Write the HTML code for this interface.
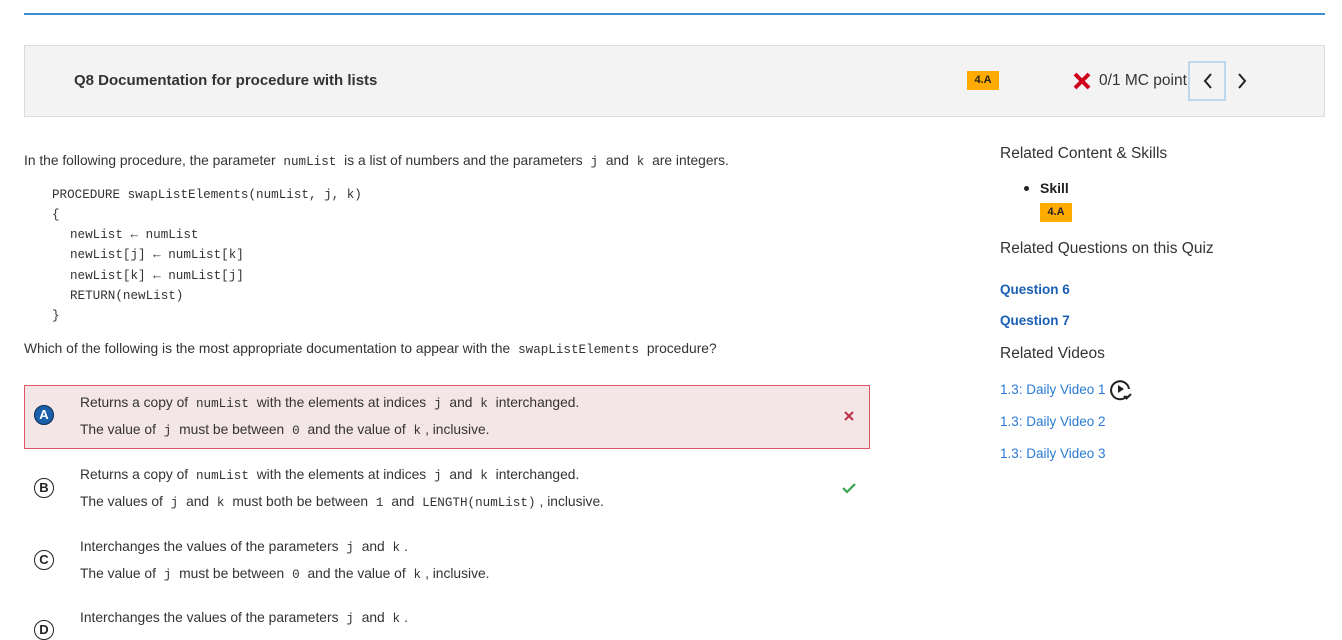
<!DOCTYPE html>
<html><head><style>
body{margin:0;width:1342px;height:623px;overflow:hidden;background:#fff;font-family:"Liberation Sans",Arial,sans-serif;color:#333;position:relative}
.a{position:absolute;white-space:nowrap}
code,.m{font-family:"Liberation Mono",monospace;font-size:12.6px;color:#333}
.m{line-height:16px;height:16px}
code{padding:0 4px}
.t{font-size:13.8px;color:#333}
.circ{position:absolute;width:18px;height:18px;border-radius:50%;border:1.5px solid #222;text-align:center;line-height:18px;font-weight:bold;font-size:13px;color:#222;background:#fff}
.tag{position:absolute;background:#ffab00;color:#222;font-weight:bold;font-size:11px;text-align:center}
a{color:#1a5fb4;text-decoration:none}
</style></head><body>
<div class="a" style="left:24px;top:13px;width:1301px;height:2px;background:#3a8fd0"></div>
<div class="a" style="left:24px;top:45px;width:1299px;height:70px;background:#f3f3f3;border:1px solid #dcdcdc"></div>
<div class="a" style="left:74px;top:72px;font-size:15px;font-weight:bold;color:#333">Q8 Documentation for procedure with lists</div>
<div class="tag" style="left:967px;top:71px;width:32px;height:19px;line-height:19px">4.A</div>
<svg class="a" style="left:1072px;top:71px" width="20" height="20" viewBox="0 0 20 20"><path d="M3 3L17 17M17 3L3 17" stroke="#d0021b" stroke-width="4"/></svg>
<div class="a" style="left:1099px;top:72px;font-size:15.5px;color:#333">0/1 MC point</div>
<div class="a" style="left:1188px;top:61px;width:34px;height:36px;border:2px solid #bcd7ee"></div>
<svg class="a" style="left:1202px;top:72px" width="12" height="18" viewBox="0 0 12 18"><path d="M9 2L3 9L9 16" stroke="#222" stroke-width="2" fill="none"/></svg>
<svg class="a" style="left:1236px;top:72px" width="12" height="18" viewBox="0 0 12 18"><path d="M3 2L9 9L3 16" stroke="#222" stroke-width="2" fill="none"/></svg>

<div class="a t" style="left:24px;top:153px">In the following procedure, the parameter <code>numList</code> is a list of numbers and the parameters <code>j</code> and <code>k</code> are integers.</div>
<div class="a m" style="left:52px;top:187px">PROCEDURE swapListElements(numList, j, k)</div>
<div class="a m" style="left:52px;top:207px">{</div>
<div class="a m" style="left:70px;top:227px">newList ← numList</div>
<div class="a m" style="left:70px;top:247px">newList[j] ← numList[k]</div>
<div class="a m" style="left:70px;top:268px">newList[k] ← numList[j]</div>
<div class="a m" style="left:70px;top:288px">RETURN(newList)</div>
<div class="a m" style="left:52px;top:308px">}</div>
<div class="a t" style="left:24px;top:341px">Which of the following is the most appropriate documentation to appear with the <code>swapListElements</code> procedure?</div>

<div class="a" style="left:24px;top:385px;width:844px;height:62px;background:#f4e5e6;border:1px solid #e05563"></div>
<div class="circ" style="left:34px;top:405px;background:#1a5fa8;color:#fff;border-color:#0b2e55">A</div>
<div class="a t" style="left:80px;top:395px">Returns a copy of <code>numList</code> with the elements at indices <code>j</code> and <code>k</code> interchanged.</div>
<div class="a t" style="left:80px;top:422px">The value of <code>j</code> must be between <code>0</code> and the value of <code>k</code>, inclusive.</div>
<svg class="a" style="left:843px;top:410px" width="12" height="12" viewBox="0 0 12 12"><path d="M2 2L10 10M10 2L2 10" stroke="#c0304a" stroke-width="2"/></svg>

<div class="circ" style="left:34px;top:478px">B</div>
<div class="a t" style="left:80px;top:467px">Returns a copy of <code>numList</code> with the elements at indices <code>j</code> and <code>k</code> interchanged.</div>
<div class="a t" style="left:80px;top:494px">The values of <code>j</code> and <code>k</code> must both be between <code>1</code> and <code>LENGTH(numList)</code>, inclusive.</div>
<svg class="a" style="left:842px;top:482px" width="14" height="12" viewBox="0 0 14 12"><path d="M1 6L5 10L13 2" stroke="#3aa350" stroke-width="2.2" fill="none"/></svg>

<div class="circ" style="left:34px;top:550px">C</div>
<div class="a t" style="left:80px;top:539px">Interchanges the values of the parameters <code>j</code> and <code>k</code>.</div>
<div class="a t" style="left:80px;top:566px">The value of <code>j</code> must be between <code>0</code> and the value of <code>k</code>, inclusive.</div>
<div class="circ" style="left:34px;top:620px">D</div>
<div class="a t" style="left:80px;top:610px">Interchanges the values of the parameters <code>j</code> and <code>k</code>.</div>

<div class="a" style="left:1000px;top:145px;font-size:15.5px;color:#333">Related Content &amp; Skills</div>
<div class="a" style="left:1024px;top:186px;width:5px;height:5px;border-radius:50%;background:#222"></div>
<div class="a" style="left:1040px;top:180px;font-size:14px;font-weight:bold;color:#222">Skill</div>
<div class="tag" style="left:1040px;top:203px;width:32px;height:19px;line-height:19px">4.A</div>
<div class="a" style="left:1000px;top:240px;font-size:15.5px;color:#333">Related Questions on this Quiz</div>
<div class="a" style="left:1000px;top:282px;font-size:13.5px;font-weight:bold"><a>Question 6</a></div>
<div class="a" style="left:1000px;top:313px;font-size:13.5px;font-weight:bold"><a>Question 7</a></div>
<div class="a" style="left:1000px;top:345px;font-size:15.5px;color:#333">Related Videos</div>
<div class="a" style="left:1000px;top:382px;font-size:13.5px"><a style="color:#2a7ad4">1.3: Daily Video 1</a></div>
<svg class="a" style="left:1110px;top:379px" width="24" height="22" viewBox="0 0 24 22"><path d="M17 17A9 9 0 1 1 19 10" stroke="#222" stroke-width="2" fill="none"/><path d="M8 6L14 10L8 14Z" fill="#222"/><path d="M14 17L16.5 19.5L21 15" stroke="#222" stroke-width="2" fill="none"/></svg>
<div class="a" style="left:1000px;top:414px;font-size:13.5px"><a style="color:#2a7ad4">1.3: Daily Video 2</a></div>
<div class="a" style="left:1000px;top:446px;font-size:13.5px"><a style="color:#2a7ad4">1.3: Daily Video 3</a></div>
</body></html>
